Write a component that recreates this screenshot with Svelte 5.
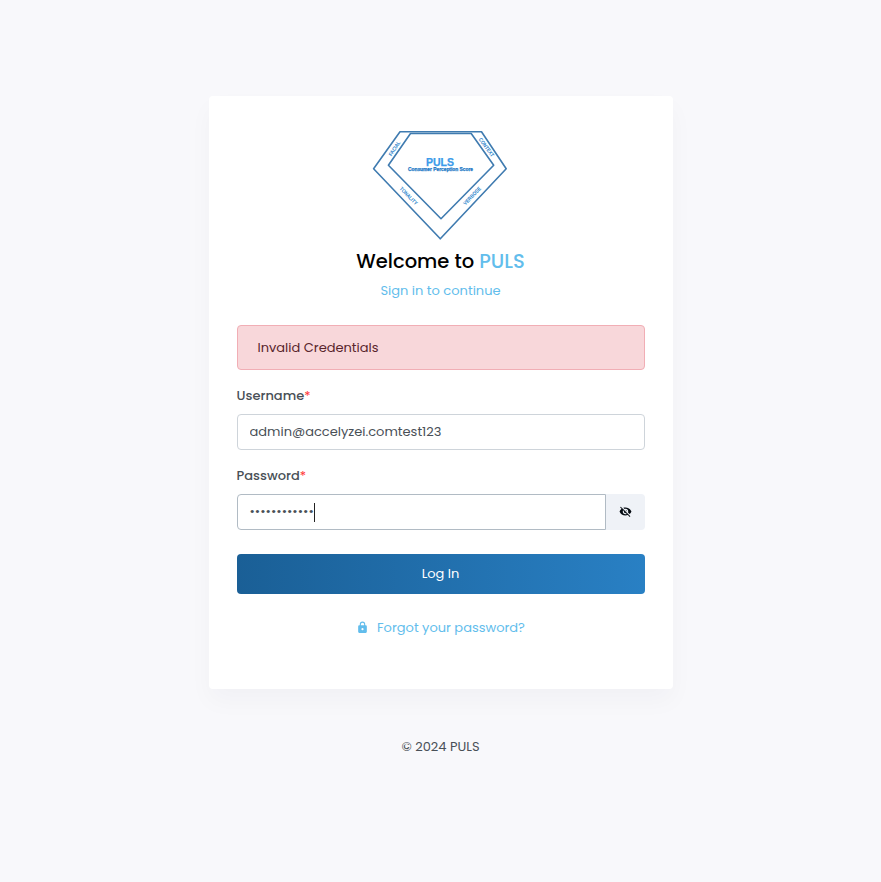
<script>
  let username = $state('admin@accelyzei.comtest123');
  const mask = '•'.repeat(12);
</script>

<main>
  <section class="card">
    <svg class="logo" width="144" height="120" viewBox="368 124 144 120" role="img" aria-label="PULS">
      <g fill="none" stroke="#3f7bb0" stroke-width="1.6" stroke-linejoin="round">
        <path d="M400 131.8H481.5L506.2 168.8L440.3 238.8L373.6 168.8Z" />
        <path d="M410.5 133.5H471.2L493.7 165.3L441 218.7L388.4 165.3Z" />
      </g>
      <g fill="#3b9bea" font-family="'Liberation Sans', Arial, sans-serif" font-weight="700" text-anchor="middle">
        <text x="440" y="165.8" font-size="10.8" textLength="28" lengthAdjust="spacingAndGlyphs" stroke="#3b9bea" stroke-width=".25">PULS</text>
        <text x="440.5" y="171.4" font-size="4.8" textLength="65" lengthAdjust="spacingAndGlyphs" fill="#1976c5" stroke="#1976c5" stroke-width=".25">Consumer Perception Score</text>
        <g font-size="5.4" fill="#2b84cb">
          <text transform="translate(396 149.6) rotate(-56)" textLength="16.5" lengthAdjust="spacingAndGlyphs">FACIAL</text>
          <text transform="translate(485 148.4) rotate(54)" textLength="22" lengthAdjust="spacingAndGlyphs">CONTEXT</text>
          <text transform="translate(407.3 197.2) rotate(46)" textLength="23" lengthAdjust="spacingAndGlyphs">TONALITY</text>
          <text transform="translate(473.5 197.2) rotate(-46)" textLength="23" lengthAdjust="spacingAndGlyphs">VERBOSE</text>
        </g>
      </g>
    </svg>
    <h1>Welcome to <span class="brand">PULS</span></h1>
    <p class="sub">Sign in to continue</p>

    <div class="alert">Invalid Credentials</div>

    <label for="user">Username<i>*</i></label>
    <input id="user" class="field" bind:value={username} />

    <label for="pass">Password<i>*</i></label>
    <div class="group">
      <div id="pass" class="field pass"><span>{mask}</span><span class="caret"></span></div>
      <button class="eye" aria-label="Show password">
        <svg width="13" height="13" viewBox="0 0 24 24"><path fill="#050b12" d="M11.83 9L15 12.16V12a3 3 0 0 0-3-3zm-4.3.8l1.55 1.55c-.05.21-.08.42-.08.65a3 3 0 0 0 3 3c.22 0 .44-.03.65-.08l1.55 1.55c-.67.33-1.41.53-2.2.53a5 5 0 0 1-5-5c0-.79.2-1.53.53-2.2M2 4.27l2.28 2.28.45.45C3.08 8.3 1.78 10 1 12c1.73 4.39 6 7.5 11 7.5 1.55 0 3.03-.3 4.38-.84l.43.42L19.73 22 21 20.73 3.27 3M12 7a5 5 0 0 1 5 5c0 .64-.13 1.26-.36 1.82l2.93 2.93c1.5-1.25 2.7-2.89 3.43-4.75-1.73-4.39-6-7.5-11-7.5-1.4 0-2.74.25-4 .7l2.17 2.15C10.74 7.13 11.35 7 12 7z" /></svg>
      </button>
    </div>

    <button class="login">Log In</button>

    <a class="forgot" href="#forgot">
      <svg width="13" height="13" viewBox="0 0 24 24"><path fill="#62bdec" d="M12 17a2 2 0 0 0 2-2 2 2 0 0 0-2-2 2 2 0 0 0-2 2 2 2 0 0 0 2 2m6-9a2 2 0 0 1 2 2v10a2 2 0 0 1-2 2H6a2 2 0 0 1-2-2V10a2 2 0 0 1 2-2h1V6a5 5 0 0 1 10 0v2h1m-6-5a3 3 0 0 0-3 3v2h6V6a3 3 0 0 0-3-3z" /></svg>
      <span>Forgot your password?</span>
    </a>
  </section>
  <footer>© 2024 PULS</footer>
</main>

<style>
  :global(body) { background: #f8f8fb; }
  main {
    min-height: 882px; box-sizing: border-box; padding-top: 96px;
    display: flex; flex-direction: column; align-items: center;
    font: 13px/20px Poppins, Inter, sans-serif;
    color: #495057;
  }
  .card {
    width: 464px; height: 593px; box-sizing: border-box; padding: 28px;
    background: #fff; border-radius: 4px;
    box-shadow: 0 12px 24px rgba(18, 38, 63, .03);
    display: flex; flex-direction: column;
  }
  .logo { display: block; align-self: center; margin-left: -2px; }
  h1 {
    margin: 4px 0 0; height: 28px; line-height: 28px; font-size: 19.5px; font-weight: 500;
    color: #000; text-align: center; white-space: nowrap;
  }
  .brand, .sub, .forgot { color: #62bdec; }
  .sub { margin: 5px 0 0; text-align: center; }
  .alert {
    height: 45px; box-sizing: border-box; margin: 24px 0 16px; padding: 0 20px; line-height: 43px;
    background: #f8d7da; border: 1px solid #f1aeb5; border-radius: 4px; color: #58252c;
  }
  label { height: 20px; font-weight: 500; margin-bottom: 8px; }
  i { color: #f33; font-style: normal; font-weight: 400; }
  .field {
    height: 36px; box-sizing: border-box; padding: 0 12px; border: 1px solid #ced4da;
    border-radius: 4px; background: #fff; color: #495057; outline: 0;
    font: inherit; margin: 0 0 16px;
  }
  .group { display: flex; height: 36px; margin-bottom: 24px; }
  .pass {
    flex: 1; margin: 0; border-color: #b1bbc4; border-radius: 4px 0 0 4px;
    display: flex; align-items: center;
  }
  .caret { width: 1px; height: 19px; background: #222; }
  button { border: 0; padding: 0; font: inherit; }
  .eye {
    width: 39px; padding-bottom: 1px; background: #eff2f7; border-radius: 0 4px 4px 0;
    display: flex; align-items: center; justify-content: center;
  }
  .login {
    height: 40px; border-radius: 4px; color: #fff;
    background: linear-gradient(to right, #1a5f96, #2980c4);
  }
  .forgot {
    margin-top: 24px; display: flex; align-items: center; justify-content: center;
    gap: 8px; text-decoration: none;
  }
  .forgot svg { margin-bottom: 2px; }
  footer { margin-top: 48px; }
</style>
